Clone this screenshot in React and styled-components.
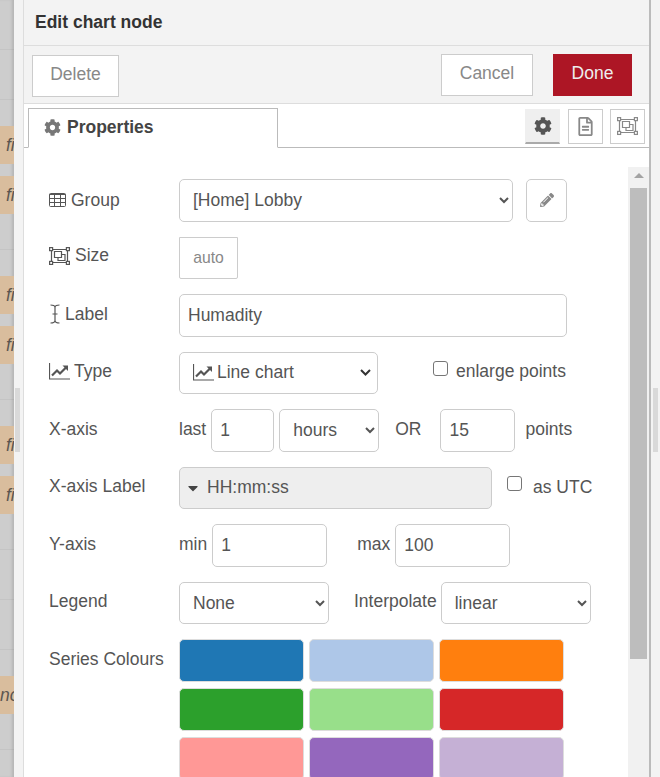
import React from "react"
import styled, { createGlobalStyle } from "styled-components"
import { FaCaretDown, FaCog, FaPencilAlt, FaRegFileAlt } from "react-icons/fa"

const GlobalStyle = createGlobalStyle`
  html, body {
    margin: 0;
    padding: 0;
    background: #fff;
  }
  * {
    box-sizing: border-box;
  }
`

const Page = styled.div`
  display: flex;
  width: 660px;
  height: 777px;
  overflow: hidden;
  font-family: "Liberation Sans", Arial, sans-serif;
  font-size: 17.5px;
  color: #555;
`

const Canvas = styled.div`
  display: flex;
  flex-direction: column;
  width: 14px;
  padding-top: 126px;
  flex-shrink: 0;
  overflow: hidden;
  background: repeating-linear-gradient(180deg, #cdcdcd 0, #cdcdcd 49px, #c4c4c4 49px, #c4c4c4 50px);
  box-shadow: inset -3px 0 3px -1px rgba(0, 0, 0, 0.12);
`

const CanvasNode = styled.div`
  display: flex;
  align-items: center;
  flex-shrink: 0;
  height: 38px;
  margin-bottom: ${({ $after }) => $after}px;
  padding-left: ${({ $pad }) => $pad}px;
  background: #d9bd9d;
  color: #5c5650;
  font-style: italic;
  font-size: 17.5px;
  white-space: nowrap;
`

const Sash = styled.div`
  flex-shrink: 0;
  width: 10px;
  padding: 388px 0 0 1px;
  background: #f3f3f3;
  border-right: 1px solid #ddd;
`

const SashHandle = styled.div`
  width: 5px;
  height: 64px;
  background: #d9d9d9;
`

const RightSash = styled(Sash)`
  width: 11px;
  padding-left: 2px;
  border-right: 0;
  border-left: 2px solid #bbb;
`

const Panel = styled.div`
  display: flex;
  flex-direction: column;
  flex: 1;
  min-width: 0;
`

const Title = styled.div`
  flex-shrink: 0;
  height: 46px;
  padding: 12px 0 0 11px;
  background: #f3f3f3;
  border-bottom: 1px solid #ddd;
  color: #333;
  font-weight: 700;
  line-height: 20px;
`

const Toolbar = styled.div`
  display: flex;
  flex-shrink: 0;
  justify-content: space-between;
  align-items: flex-start;
  height: 58px;
  padding: 9px 17px 0 8px;
  background: #f3f3f3;
  border-bottom: 1px solid #ddd;
`

const ActionGroup = styled.div`
  display: flex;
  gap: 20px;
  margin-top: -1px;
`

const ActionButton = styled.button`
  width: ${({ $w }) => $w}px;
  height: 42px;
  padding: 0 0 4px;
  background: ${({ $primary }) => ($primary ? "#ad1625" : "#fff")};
  border: 1px solid ${({ $primary }) => ($primary ? "#ad1625" : "#ccc")};
  border-radius: 0;
  color: ${({ $primary }) => ($primary ? "#eee" : "#888")};
  font: inherit;
`

const TabBar = styled.div`
  display: flex;
  flex-shrink: 0;
  justify-content: space-between;
  align-items: flex-start;
  height: 44px;
  padding: 4px 4px 0 4px;
  border-bottom: 1px solid #bbb;
`

const Tab = styled.div`
  display: flex;
  align-items: center;
  gap: 6px;
  width: 250px;
  height: 40px;
  padding: 0 0 2px 15px;
  background: #fff;
  border: 1px solid #bbb;
  border-bottom: 1px solid #fff;
  color: #444;
  font-weight: 700;
  svg {
    color: #777;
    font-size: 17px;
  }
`

const TabIcons = styled.div`
  display: flex;
  gap: 7.5px;
  margin-top: 1px;
`

const TabIcon = styled.button`
  display: flex;
  justify-content: center;
  align-items: center;
  width: 35px;
  height: 35px;
  padding: 0;
  background: ${({ $active }) => ($active ? "#efefef" : "#fff")};
  border: 1px solid ${({ $active }) => ($active ? "#efefef" : "#ccc")};
  border-bottom: ${({ $active }) => ($active ? "2px solid #aaa" : "1px solid #ccc")};
  color: ${({ $active }) => ($active ? "#555" : "#888")};
  font-size: ${({ $size }) => $size || 18}px;
`

const Body = styled.div`
  display: flex;
  flex: 1;
  min-height: 0;
`

const Form = styled.div`
  display: flex;
  flex-direction: column;
  flex: 1;
  gap: 15px;
  min-width: 0;
  padding: 31px 0 0 25px;
`

const Scrollbar = styled.div`
  flex-shrink: 0;
  width: 21px;
  margin-top: 19px;
  padding: 0 2px;
  background: #f1f1f1;
`

const ScrollArrow = styled.div`
  width: 0;
  height: 0;
  margin: 6px auto 10px;
  border-left: 5px solid transparent;
  border-right: 5px solid transparent;
  border-bottom: 5px solid #a3a3a3;
`

const ScrollThumb = styled.div`
  height: 471px;
  background: #bdbdbd;
`

const Row = styled.div`
  display: flex;
  flex-shrink: 0;
  align-items: center;
  height: 42.5px;
`

const TopRow = styled(Row)`
  align-items: flex-start;
  height: auto;
`

const Label = styled.label`
  display: flex;
  flex-shrink: 0;
  align-items: center;
  gap: ${({ $gap }) => $gap || 4}px;
  width: 130px;
  margin-top: ${({ $top }) => $top || 0}px;
  svg {
    flex-shrink: 0;
    color: #555;
  }
`

const SideText = styled.span`
  margin-left: ${({ $ml }) => $ml || 0}px;
  margin-top: ${({ $top }) => $top ?? -1}px;
`

const controlBase = `
  height: 42.5px;
  background: #fff;
  border: 1px solid #ccc;
  border-radius: 5px;
  color: #555;
  font: inherit;
`

const Input = styled.input`
  ${controlBase}
  width: ${({ $w }) => $w}px;
  margin-left: ${({ $ml }) => $ml || 0}px;
  padding: 0 8px;
  outline: none;
`

const Select = styled.select`
  ${controlBase}
  width: ${({ $w }) => $w}px;
  margin-left: ${({ $ml }) => $ml || 0}px;
  padding: 0 4px 0 9px;
  outline: none;
`

const SmallButton = styled.button`
  ${controlBase}
  display: flex;
  justify-content: center;
  align-items: center;
  width: ${({ $w }) => $w}px;
  margin-left: ${({ $ml }) => $ml || 0}px;
  padding: 0;
  color: #888;
  font-size: ${({ $muted }) => ($muted ? "15.75px" : "14px")};
`

const SquareButton = styled(SmallButton)`
  border-radius: 0;
  border-bottom-left-radius: 2px;
  border-bottom-right-radius: 2px;
`

const TypeButton = styled.button`
  ${controlBase}
  display: flex;
  align-items: center;
  gap: 3px;
  width: 199px;
  padding: 0 6px 0 13px;
`

const Chevron = styled.svg`
  width: 11px;
  height: 7px;
  margin-left: auto;
  fill: none;
  stroke: #333;
  stroke-width: 2;
`

const TypedInput = styled.div`
  ${controlBase}
  display: flex;
  align-items: center;
  gap: 6px;
  width: 313px;
  padding: 0 5px;
  background: #eee;
  svg {
    color: #444;
    font-size: 16px;
  }
`

const CheckGroup = styled.label`
  display: flex;
  align-items: center;
  gap: ${({ $gap }) => $gap}px;
  margin-left: ${({ $ml }) => $ml}px;
  margin-top: -4px;
`

const Checkbox = styled.input`
  flex-shrink: 0;
  width: 15px;
  height: 15px;
  margin: 0 0 4px;
  appearance: none;
  background: #fff;
  border: 1px solid #767676;
  border-radius: 3px;
`

const CheckText = styled.span`
  margin-top: ${({ $top }) => $top || 0}px;
`

const SwatchGrid = styled.div`
  display: grid;
  grid-template-columns: repeat(3, 125px);
  grid-auto-rows: 43px;
  gap: 6px 5px;
`

const Swatch = styled.div`
  background: ${({ $color }) => $color};
  border: 1px solid #ddd;
  border-radius: 5px;
`

const SERIES_COLOURS = [
  "#1f77b4",
  "#aec7e8",
  "#ff7f0e",
  "#2ca02c",
  "#98df8a",
  "#d62728",
  "#ff9896",
  "#9467bd",
  "#c5b0d5",
]

const TableIcon = () => (
  <svg width="17" height="14" viewBox="0 0 17 14" fill="none" stroke="currentColor" strokeWidth="1">
    <rect x="0.5" y="0.5" width="16" height="13" rx="1" />
    <path d="M0.5 1.5h16M0.5 5.500h16M0.5 9.500h16M5.500 1.500v12M11.500 1.500v12" />
  </svg>
)

const ObjectGroupIcon = ({ size = 21 }) => (
  <svg width={size} height={size * 0.86} viewBox="0 0 21 18" fill="none" stroke="currentColor" strokeWidth="1.2">
    <path d="M2.500 2.500h16v13h-16z" />
    <rect x="0.6" y="0.6" width="3" height="3" fill="#fff" />
    <rect x="17.4" y="0.6" width="3" height="3" fill="#fff" />
    <rect x="0.6" y="14.4" width="3" height="3" fill="#fff" />
    <rect x="17.4" y="14.4" width="3" height="3" fill="#fff" />
    <path d="M5.500 4.500h7v6h-7z" />
    <path d="M12.500 7.500h3.500v6h-7v-3" />
  </svg>
)

const CursorIcon = () => (
  <svg width="12" height="20" viewBox="0 0 12 20" fill="none" stroke="currentColor" strokeWidth="1.2">
    <path d="M1.500 1c2.500 0 4.500 .6 4.500 2.500v13c0 1.900-2 2.500-4.500 2.500M10.500 1c-2.500 0-4.500 .6-4.500 2.500M10.500 19c-2.500 0-4.500-.6-4.500-2.500M3.500 10h5" />
  </svg>
)

const LineChartIcon = () => (
  <svg width="21" height="17" viewBox="0 0 21 17" fill="none" stroke="currentColor">
    <path d="M0.5 0v16h20.500" strokeWidth="1.2" />
    <path d="M3 12.500l5-5 3 3 6-6" strokeWidth="2.2" />
    <path d="M13.500 2.500h5.500v5.500z" fill="currentColor" stroke="none" />
  </svg>
)

export default function App() {
  return (
    <Page>
      <GlobalStyle />
      <Canvas>
        <CanvasNode $after={12} $pad={6}>fi</CanvasNode>
        <CanvasNode $after={62} $pad={6}>fi</CanvasNode>
        <CanvasNode $after={12} $pad={6}>fi</CanvasNode>
        <CanvasNode $after={62} $pad={6}>fi</CanvasNode>
        <CanvasNode $after={12} $pad={6}>fi</CanvasNode>
        <CanvasNode $after={162} $pad={6}>fi</CanvasNode>
        <CanvasNode $after={0} $pad={0}>nc</CanvasNode>
      </Canvas>
      <Sash>
        <SashHandle />
      </Sash>
      <Panel>
        <Title>Edit chart node</Title>
        <Toolbar>
          <ActionButton $w={87}>Delete</ActionButton>
          <ActionGroup>
            <ActionButton $w={92}>Cancel</ActionButton>
            <ActionButton $w={79} $primary>Done</ActionButton>
          </ActionGroup>
        </Toolbar>
        <TabBar>
          <Tab>
            <FaCog />
            Properties
          </Tab>
          <TabIcons>
            <TabIcon $active><FaCog /></TabIcon>
            <TabIcon $size={19}><FaRegFileAlt /></TabIcon>
            <TabIcon><ObjectGroupIcon /></TabIcon>
          </TabIcons>
        </TabBar>
        <Body>
          <Form>
            <Row>
              <Label $gap={5}><TableIcon />Group</Label>
              <Select $w={334} defaultValue="lobby">
                <option value="lobby">[Home] Lobby</option>
              </Select>
              <SmallButton $w={41} $ml={13}><FaPencilAlt /></SmallButton>
            </Row>
            <Row>
              <Label $top={-4} $gap={5}><ObjectGroupIcon />Size</Label>
              <SquareButton $w={59} $muted>auto</SquareButton>
            </Row>
            <Row>
              <Label $top={-2}><CursorIcon />Label</Label>
              <Input $w={388} defaultValue="Humadity" />
            </Row>
            <Row>
              <Label $top={-2} $gap={4}><LineChartIcon />Type</Label>
              <TypeButton>
                <LineChartIcon />
                Line chart
                <Chevron viewBox="0 0 11 7"><path d="M1 1l4.500 4.500L10 1" /></Chevron>
              </TypeButton>
              <CheckGroup $ml={55} $gap={8}>
                <Checkbox type="checkbox" />
                <CheckText $top={2}>enlarge points</CheckText>
              </CheckGroup>
            </Row>
            <Row>
              <Label $top={-2}>X-axis</Label>
              <SideText>last</SideText>
              <Input $w={63} $ml={5} defaultValue="1" />
              <Select $w={100} $ml={5} defaultValue="hours">
                <option value="hours">hours</option>
              </Select>
              <SideText $ml={16}>OR</SideText>
              <Input $w={75} $ml={19} defaultValue="15" />
              <SideText $ml={10}>points</SideText>
            </Row>
            <Row>
              <Label $top={-2}>X-axis Label</Label>
              <TypedInput><FaCaretDown />HH:mm:ss</TypedInput>
              <CheckGroup $ml={15} $gap={11}>
                <Checkbox type="checkbox" />
                <CheckText $top={4}>as UTC</CheckText>
              </CheckGroup>
            </Row>
            <Row>
              <Label $top={-2}>Y-axis</Label>
              <SideText>min</SideText>
              <Input $w={115} $ml={5} defaultValue="1" />
              <SideText $ml={30}>max</SideText>
              <Input $w={115} $ml={5} defaultValue="100" />
            </Row>
            <Row>
              <Label $top={-2}>Legend</Label>
              <Select $w={150} defaultValue="none">
                <option value="none">None</option>
              </Select>
              <SideText $ml={25} $top={-3}>Interpolate</SideText>
              <Select $w={150} $ml={4} defaultValue="linear">
                <option value="linear">linear</option>
              </Select>
            </Row>
            <TopRow>
              <Label $top={10}>Series Colours</Label>
              <SwatchGrid>
                {SERIES_COLOURS.map(colour => (
                  <Swatch key={colour} $color={colour} />
                ))}
              </SwatchGrid>
            </TopRow>
          </Form>
          <Scrollbar>
            <ScrollArrow />
            <ScrollThumb />
          </Scrollbar>
        </Body>
      </Panel>
      <RightSash>
        <SashHandle />
      </RightSash>
    </Page>
  )
}
